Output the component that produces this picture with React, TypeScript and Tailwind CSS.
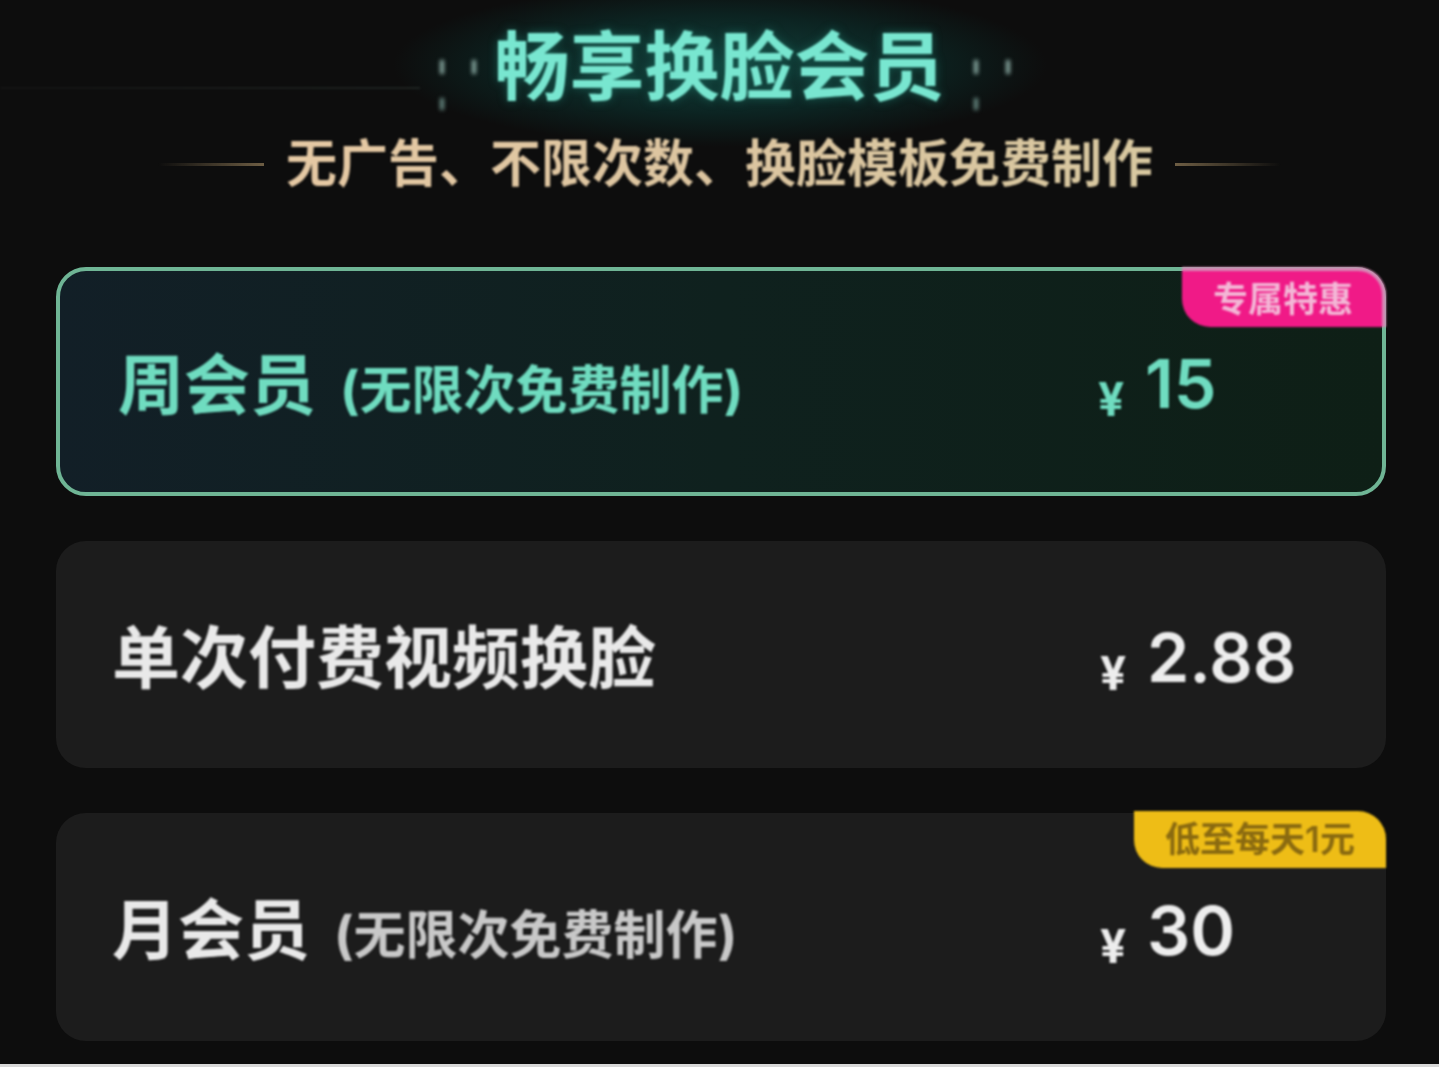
const cjk = "font-['Inter','Noto_Sans_CJK_SC',sans-serif]";

function Sparks({ className }: { className: string }) {
  return (
    <div className={`absolute top-[60px] flex h-[50px] w-[36px] justify-between blur-[2px] ${className}`}>
      <div className="flex h-full flex-col justify-between">
        <span className="h-[14px] w-[4px] bg-[#8fb0a8]" />
        <span className="h-[12px] w-[4px] bg-[#6c8f88]" />
      </div>
      <div className="flex h-full flex-col">
        <span className="h-[14px] w-[4px] bg-[#8fb0a8]" />
      </div>
    </div>
  );
}

function Price({ value, color, className }: { value: string; color: string; className: string }) {
  return (
    <div className={`flex items-baseline pt-[5px] font-semibold blur-[0.9px] ${color} ${className}`}>
      <span className="w-[47px] translate-y-[8px] text-[46px] leading-none font-bold">¥</span>
      <span className="text-[68px] leading-none">{value}</span>
    </div>
  );
}

function Card({
  name,
  note,
  price,
  active,
  badge,
  height,
}: {
  name: string;
  note?: string;
  price: string;
  active?: boolean;
  badge?: React.ReactNode;
  height: string;
}) {
  return (
    <div
      className={`relative flex items-center rounded-[30px] ${height} ${
        active
          ? "border-[4px] border-[#6fb595] bg-gradient-to-r from-[#121f27] via-[#0f211e] to-[#0e1f16] pl-[58px]"
          : "bg-[#1c1c1c] pl-[56px]"
      }`}
    >
      <div className={`flex flex-1 items-baseline pt-[6px] blur-[0.9px] ${active ? "text-[#6fdcc0]" : "text-[#e9e9e9]"}`}>
        <span className={`${note ? "text-[66px]" : "text-[68px]"} leading-none font-bold`}>{name}</span>
        {note && (
          <span className={`text-[52px] leading-none font-bold ${active ? "ml-[24px]" : "ml-[24px] text-[#c8c8c8]"}`}>
            ({note})
          </span>
        )}
      </div>
      <Price
        value={price}
        color={active ? "text-[#6fdcc0]" : "text-[#ededed]"}
        className={active ? "w-[284px] -translate-y-[1px]" : "w-[286px]"}
      />
      {badge}
    </div>
  );
}

export default function App() {
  return (
    <div className={`relative flex h-[1067px] w-full flex-col overflow-hidden bg-[#0d0d0d] ${cjk}`}>
      <header className="relative h-[267px] shrink-0">
        <div className="absolute left-[380px] top-[-20px] h-[170px] w-[680px] bg-[radial-gradient(ellipse_at_center,#12413c_0%,#0c2422_40%,transparent_68%)]" />
        <div className="absolute left-0 top-[87px] h-[2px] w-[420px] bg-gradient-to-r from-[#141414] to-[#1f2422] blur-[1px]" />
        <Sparks className="left-[440px]" />
        <Sparks className="left-[974px]" />
        <h1 className="relative pt-[25px] text-center text-[75px] leading-[84px] font-bold text-[#78e6d0] blur-[1px] [text-shadow:0_0_10px_#17594f]">
          畅享换脸会员
        </h1>
        <div className="relative mt-[27px] flex items-center justify-center gap-[22px]">
          <span className="h-[3px] w-[106px] bg-gradient-to-r from-transparent to-[#6e5e44] blur-[0.6px]" />
          <span className="bg-gradient-to-r from-[#e6c9a4] via-[#dcc5a0] to-[#d8c8a0] bg-clip-text text-[51px] leading-[56px] font-semibold text-transparent blur-[0.9px]">
            无广告、不限次数、换脸模板免费制作
          </span>
          <span className="h-[3px] w-[106px] bg-gradient-to-l from-transparent to-[#6e5e44] blur-[0.6px]" />
        </div>
      </header>

      <main className="flex flex-col gap-[45px] pl-[56px] pr-[53px]">
        <Card
          active
          name="周会员"
          note="无限次免费制作"
          price="15"
          height="h-[229px]"
          badge={
            <div className="absolute right-[-4px] top-[-4px] flex h-[60px] w-[204px] items-center justify-center rounded-tr-[28px] rounded-bl-[28px] border-t-[4px] border-r-[4px] border-[#d58ab5] bg-[#f01a87] pl-[2px] text-[35px] font-semibold text-[#f3b7d6] blur-[0.9px]">
              专属特惠
            </div>
          }
        />
        <Card name="单次付费视频换脸" price="2.88" height="h-[227px]" />
        <Card
          name="月会员"
          note="无限次免费制作"
          price="30"
          height="h-[228px]"
          badge={
            <div className="absolute right-0 top-[-2px] flex h-[57px] w-[252px] items-center justify-center rounded-tr-[28px] rounded-bl-[28px] bg-[#eebd16] text-[35px] font-semibold text-[#8a6a10] blur-[0.9px]">
              低至每天1元
            </div>
          }
        />
      </main>
      <div className="absolute bottom-0 left-0 h-[3px] w-full bg-[#d8d8d8]" />
    </div>
  );
}
